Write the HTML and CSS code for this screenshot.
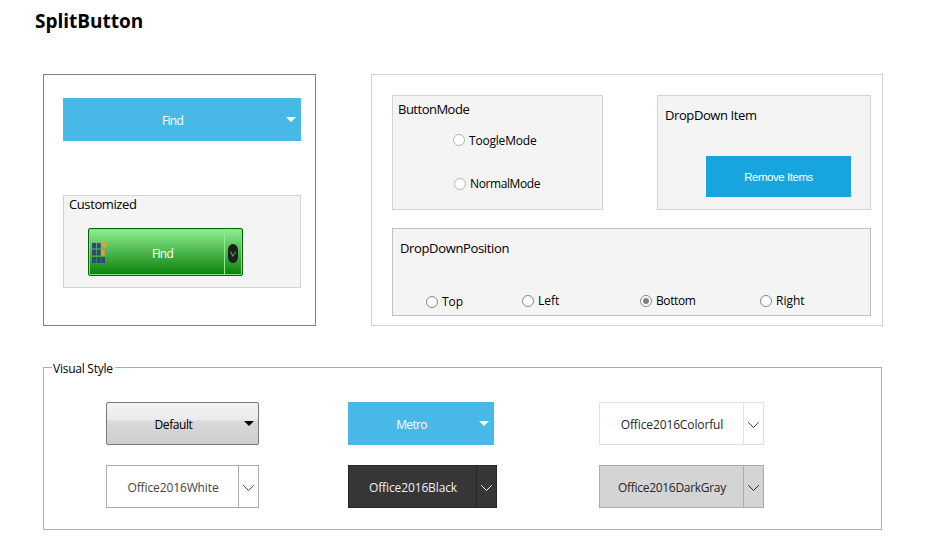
FILE: index.html
```html
<!DOCTYPE html>
<html lang="en">
<head>
<meta charset="utf-8">
<title>SplitButton</title>
<link rel="stylesheet" href="styles.css">
</head>
<body>
<h1 class="title">SplitButton</h1>
<main>
  <div class="top-row">
    <section class="panel demo">
      <button class="split metro find"><span class="label"><span class="t-find">Find</span></span><span class="drop"><svg class="tri" width="10" height="5" viewBox="0 0 10 5"><path d="M0 0H10L5 5Z"/></svg></span></button>
      <div class="group customized">
        <div class="caption t-customized">Customized</div>
        <button class="split green">
          <svg class="app-icon" width="16" height="24" viewBox="0 0 16 24"><g fill="#34467f"><path d="M0 3h4v5.500H0zM4.700 3h4v5.500H4.700zM0 9.500h4v6H0zM4.700 9.500h4v6H4.700zM0 17h4v6H0zM4.700 17h4v6H4.700zM9.200 17h3.800v6H9.200z"/></g><path fill="#f09a35" d="M12.300 0.500L15.300 4.500L12.300 8.500L9.300 4.500ZM9.200 9.800h3.500v6H9.200z"/></svg>
          <span class="label"><span class="t-find">Find</span></span>
          <span class="drop"><svg width="10" height="19" viewBox="0 0 10 19"><rect width="10" height="19" rx="4.800" ry="6" fill="#1c1f1c"/><path d="M2.200 7.500L5 12L7.800 7.500" fill="none" stroke="#4a9a4a" stroke-width="1.200"/></svg></span>
        </button>
      </div>
    </section>
    <section class="panel options">
      <div class="option-row">
        <div class="group mode">
          <div class="caption t-mode">ButtonMode</div>
          <label class="radio pale r1"><i class="dot"></i><span class="t-toogle">ToogleMode</span></label>
          <label class="radio pale r2"><i class="dot"></i><span class="t-normal">NormalMode</span></label>
        </div>
        <div class="group items">
          <div class="caption t-item">DropDown Item</div>
          <button class="remove"><span class="t-remove">Remove Items</span></button>
        </div>
      </div>
      <div class="group position">
        <div class="caption t-position">DropDownPosition</div>
        <div class="radios">
          <label class="radio top"><i class="dot"></i><span class="t-top">Top</span></label>
          <label class="radio"><i class="dot"></i><span class="t-left">Left</span></label>
          <label class="radio"><i class="dot checked"></i><span class="t-bottom">Bottom</span></label>
          <label class="radio"><i class="dot"></i><span class="t-right">Right</span></label>
        </div>
      </div>
    </section>
  </div>
  <fieldset class="styles">
    <legend><span class="t-legend">Visual Style</span></legend>
    <div class="style-grid">
      <button class="split default"><span class="label"><span class="t-default">Default</span></span><span class="drop"><svg class="tri" width="10" height="5" viewBox="0 0 10 5"><path d="M0 0H10L5 5Z"/></svg></span></button>
      <button class="split metro small"><span class="label"><span class="t-metro">Metro</span></span><span class="drop"><svg class="tri" width="10" height="5" viewBox="0 0 10 5"><path d="M0 0H10L5 5Z"/></svg></span></button>
      <button class="split office colorful"><span class="label"><span class="t-colorful">Office2016Colorful</span></span><span class="drop"><svg width="11" height="6" viewBox="0 0 11 6"><path d="M0.200 0.200L5.500 5.500L10.800 0.200"/></svg></span></button>
      <button class="split office white"><span class="label"><span class="t-white">Office2016White</span></span><span class="drop"><svg width="11" height="6" viewBox="0 0 11 6"><path d="M0.200 0.200L5.500 5.500L10.800 0.200"/></svg></span></button>
      <button class="split office black"><span class="label"><span class="t-black">Office2016Black</span></span><span class="drop"><svg width="11" height="6" viewBox="0 0 11 6"><path d="M0.200 0.200L5.500 5.500L10.800 0.200"/></svg></span></button>
      <button class="split office gray"><span class="label"><span class="t-gray">Office2016DarkGray</span></span><span class="drop"><svg width="11" height="6" viewBox="0 0 11 6"><path d="M0.200 0.200L5.500 5.500L10.800 0.200"/></svg></span></button>
    </div>
  </fieldset>
</main>
</body>
</html>
```
FILE: styles.css
```css
* { box-sizing: border-box; }
body { margin: 0; width: 933px; height: 560px; overflow: hidden; background: #fff; color: #000; font: 12px/16px "Open Sans", "Noto Sans", sans-serif; white-space: nowrap; }
button { font: inherit; padding: 0; margin: 0; border: 0; border-radius: 0; color: inherit; display: flex; }
svg { display: block; flex: none; }
.title { margin: 0; padding: 8px 0 0 35px; height: 74px; font-size: 19px; line-height: 26px; font-weight: 700; }
main { padding-left: 43px; }
.top-row { display: flex; gap: 55px; height: 252px; }
.panel { border: 1px solid #828282; height: 252px; }
.demo { width: 273px; padding: 23px 0 0 19px; }
.options { width: 512px; border-color: #d3d3d3; padding: 20px 0 0 20px; }
.group { background: #f4f4f4; border: 1px solid #d3d3d3; }
.caption { font-size: 13px; line-height: 18px; }

.split { height: 43px; align-items: stretch; }
.label { flex: 1; display: flex; align-items: center; justify-content: center; padding: 2px 0 0 1px; }
.drop { width: 20px; display: flex; align-items: center; justify-content: center; }
.metro { background: #48b8e6; color: #fff; }
.metro .tri { fill: #fff; }
.find { width: 238px; }
.customized { width: 238px; height: 93px; margin-top: 54px; padding: 0 0 0 5px; }
.customized .caption { line-height: 16px; }
.green { width: 155px; height: 48px; margin: 16px 0 0 19px; border: 1px solid #006400; border-radius: 2px; color: #fff; background: linear-gradient(#90ee90, #088008); box-shadow: inset 0 0 0 1px #78e878; }
.green .app-icon { margin: 11px 0 0 3px; width: 16px; }
.green .label { padding: 3px 0 0; margin-left: -7px; }
.green .drop { width: 18px; border-left: 1px solid #90ee90; padding: 2px 1px 0 0; }

.option-row { display: flex; gap: 54px; }
.mode { width: 211px; height: 115px; padding: 4px 0 0 5px; }
.items { width: 214px; height: 115px; padding: 10px 0 0 7px; }
.radio { display: flex; align-items: center; gap: 4px; height: 16px; }
.dot { display: flex; width: 12px; height: 12px; border: 1px solid #888; border-radius: 50%; background: #fff; align-items: center; justify-content: center; }
.pale .dot { border-color: #b5b5b5; }
.checked::after { content: ""; width: 6px; height: 6px; border-radius: 50%; background: #808080; }
.r1 { margin: 14px 0 0 55px; }
.r1 span { padding-top: 2px; }
.r2 { margin: 28px 0 0 56px; }
.remove { width: 145px; height: 41px; margin: 32px 0 0 41px; padding-top: 1px; background: #17a5df; color: #fff; align-items: center; justify-content: center; font: 11.5px/16px "Liberation Sans", sans-serif; }
.position { width: 479px; height: 88px; border-color: #c0c0c0; margin-top: 18px; padding: 10px 0 0 7px; }
.radios { display: grid; grid-template-columns: 96px 118px 120px 80px; margin: 36px 0 0 26px; }
.radio.top { margin-top: 1px; }
.radios .radio { margin-bottom: -1px; }

.styles { min-width: 0; width: 839px; height: 171px; margin: 33px 0 0; padding: 0; border: 1px solid #acacac; }
legend { margin-left: 8px; padding: 0 2px 0 1px; height: 16px; line-height: 20px; }
.style-grid { display: grid; grid-template-columns: 242px 251px 165px; row-gap: 20px; margin: 27px 0 0 62px; }
.default { width: 153px; border: 1px solid #777; border-radius: 2px; background: linear-gradient(#f2f2f2 0, #ebebeb 17px, #dadada 18px, #cdcdcd 100%); }
.default .drop { width: 18px; }
.default .label { padding-left: 0; }
.small { width: 146px; }
.office { border: 1px solid #ababab; background: #fff; color: #444; }
.office .drop { border-left: 1px solid #ababab; padding-top: 3px; }
.office path { fill: none; stroke: #444; stroke-width: 1; }
.colorful { width: 165px; border-color: #e1e1e1; color: #262626; }
.colorful .drop { border-left-color: #e1e1e1; }
.white { width: 153px; }
.black { width: 149px; background: #363636; border-color: #262626; color: #f0f0f0; }
.black .drop { border-left-color: #262626; }
.black path { stroke: #fff; }
.gray { width: 165px; background: #d4d4d4; color: #262626; }
.gray path { stroke: #262626; }

/* Tracking per label */
.t-find { letter-spacing: -0.7px; }
.t-mode { letter-spacing: -0.5px; }
.t-customized, .t-item { letter-spacing: -0.4px; }
.t-position { letter-spacing: -0.35px; }
.t-toogle { letter-spacing: -0.2px; }
.t-normal { letter-spacing: -0.4px; }
.t-remove { letter-spacing: -0.45px; }
.t-bottom { letter-spacing: -0.4px; }
.t-legend { letter-spacing: -0.25px; }
.t-default { letter-spacing: -0.4px; }
.t-metro { letter-spacing: -0.7px; }
.t-colorful, .t-white, .t-black { letter-spacing: -0.12px; }
.t-gray { letter-spacing: -0.3px; }
```
